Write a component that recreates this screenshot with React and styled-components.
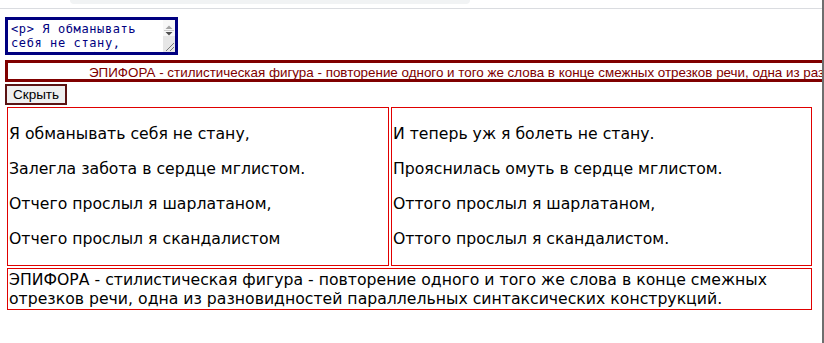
import styled, { createGlobalStyle } from "styled-components";

const poemLeft = [
  "Я обманывать себя не стану,",
  "Залегла забота в сердце мглистом.",
  "Отчего прослыл я шарлатаном,",
  "Отчего прослыл я скандалистом",
];

const poemRight = [
  "И теперь уж я болеть не стану.",
  "Прояснилась омуть в сердце мглистом.",
  "Оттого прослыл я шарлатаном,",
  "Оттого прослыл я скандалистом.",
];

const definition =
  "ЭПИФОРА - стилистическая фигура - повторение одного и того же слова в конце смежных отрезков речи, одна из разновидностей параллельных синтаксических конструкций.";

const source =
  "<p> Я обманывать себя не стану,\nЗалегла забота в сердце мглистом.\nОтчего прослыл я шарлатаном,\nОтчего прослыл я скандалистом </p>";

const GlobalStyle = createGlobalStyle`
  html, body {
    margin: 0;
    padding: 0;
    background: #fff;
    overflow: hidden;
  }
`;

function App() {
  return (
    <Frame>
      <GlobalStyle />
      <Page>
        <TopBar>
          <AddressPill />
        </TopBar>
        <Content>
          <SourceBox>
            <Source defaultValue={source} rows={2} spellCheck={false} />
            <Rail>
              <RailButtons>
                <svg width="12" height="16" viewBox="0 0 12 16">
                  <path d="M2.5 9 L6 5.5 L9.5 9 Z" fill="#a3a3a3" />
                  <line x1="1" y1="10.5" x2="11" y2="10.5" stroke="#cfcfcf" />
                  <path d="M2.5 12 L9.5 12 L6 15.5 Z" fill="#505050" />
                </svg>
              </RailButtons>
              <RailTrack>
                <svg width="12" height="12" viewBox="0 0 12 12">
                  <line x1="3" y1="11" x2="11" y2="3" stroke="#7a7a7a" />
                  <line x1="7" y1="11" x2="11" y2="7" stroke="#7a7a7a" />
                </svg>
              </RailTrack>
            </Rail>
          </SourceBox>
          <Ticker>
            <TickerText>{definition}</TickerText>
          </Ticker>
          <HideButton>Скрыть</HideButton>
          <Columns>
            <Cell>
              {poemLeft.map((line) => (
                <Line key={line}>{line}</Line>
              ))}
            </Cell>
            <Cell>
              {poemRight.map((line) => (
                <Line key={line}>{line}</Line>
              ))}
            </Cell>
          </Columns>
          <Note>{definition}</Note>
        </Content>
      </Page>
      <WindowEdge />
    </Frame>
  );
}

const Frame = styled.div`
  display: flex;
  width: 824px;
  height: 343px;
`;

const Page = styled.div`
  flex: 1;
  min-width: 0;
  overflow: hidden;
`;

const WindowEdge = styled.div`
  width: 2px;
  background: #6e6e6e;
`;

const TopBar = styled.div`
  height: 8px;
  border-bottom: 1px solid #dadce0;
  box-sizing: content-box;
`;

const AddressPill = styled.div`
  margin-left: 70px;
  width: 400px;
  height: 4px;
  background: #f1f3f4;
  border-radius: 0 0 8px 8px;
`;

const Content = styled.div`
  display: flex;
  flex-direction: column;
  align-items: flex-start;
  padding: 8px 0 0 5px;
`;

const SourceBox = styled.div`
  position: relative;
  display: flex;
`;

const Source = styled.textarea`
  box-sizing: border-box;
  width: 173px;
  height: 38px;
  margin: 0;
  padding: 2px 16px 2px 3px;
  border: 3px solid #000080;
  outline: none;
  resize: none;
  overflow: hidden;
  font-family: "DejaVu Sans Mono", monospace;
  font-size: 12px;
  letter-spacing: 0.6px;
  line-height: 14px;
  color: #000080;
  background: #fff;
`;

const Rail = styled.div`
  position: absolute;
  top: 3px;
  right: 3px;
  bottom: 3px;
  width: 12px;
  display: flex;
  flex-direction: column;
  pointer-events: none;
`;

const RailButtons = styled.div`
  height: 16px;
  background: #f7f7f7;
  display: flex;

  svg {
    display: block;
  }
`;

const RailTrack = styled.div`
  flex: 1;
  background: #e6e6e6;
  display: flex;
  align-items: flex-end;

  svg {
    display: block;
  }
`;

const Ticker = styled.div`
  box-sizing: border-box;
  width: 840px;
  height: 22px;
  margin-top: 5px;
  border: 3px solid #800000;
  padding-left: 81px;
  overflow: hidden;
  white-space: nowrap;
`;

const TickerText = styled.span`
  font-family: "Liberation Sans", Arial, sans-serif;
  font-size: 13.4px;
  line-height: 16px;
  color: #800000;
`;

const HideButton = styled.button`
  box-sizing: border-box;
  height: 21px;
  margin-top: 2px;
  padding: 0 6px;
  border: 2px solid #5a1212;
  background: #efefef;
  font-family: "Liberation Sans", Arial, sans-serif;
  font-size: 13.5px;
  color: #000;
`;

const Columns = styled.div`
  display: grid;
  grid-template-columns: 382px 421px;
  gap: 2px;
  margin: 2px 0 0 2px;
`;

const Cell = styled.div`
  border: 1px solid #e00000;
  padding: 1px;
  font-family: "DejaVu Sans", Verdana, sans-serif;
  font-size: 15.7px;
  color: #000;
`;

const Line = styled.p`
  margin: 15px 0;
  line-height: 20px;
`;

const Note = styled.div`
  box-sizing: border-box;
  width: 805px;
  margin: 2px 0 0 2px;
  padding: 1px;
  border: 1px solid #e00000;
  font-family: "DejaVu Sans", Verdana, sans-serif;
  font-size: 15.7px;
  line-height: 19px;
  color: #000;
`;

export default App;
